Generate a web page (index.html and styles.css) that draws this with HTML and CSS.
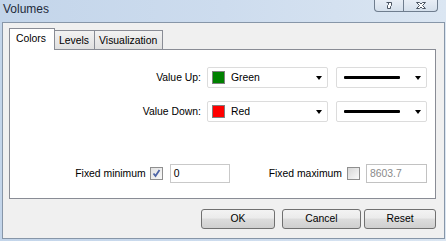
FILE: index.html
```html
<!DOCTYPE html>
<html>
<head>
<meta charset="utf-8">
<link rel="stylesheet" href="styles.css">
</head>
<body>
<div class="window">
  <div class="titlebar">
    <span class="title">Volumes</span>
    <div class="caps">
      <div class="cap help">
        <svg width="12" height="8" viewBox="0 0 12 8"><path d="M3.5 0.5 L8.5 0.5 L8.5 3.5 L7.5 4.5 L7.5 6.5 L4.5 6.5 L4.5 3.5 L5.5 2.5 L5.5 0.5" fill="#fff" stroke="#4b5563" stroke-width="1"/></svg>
      </div>
      <div class="cap close">
        <svg width="14" height="8" viewBox="0 0 14 8"><path d="M2.5 0.5 L5.5 0.5 L7 2 L8.5 0.5 L11.5 0.5 L8.5 3.5 L11.5 6.5 L8.5 6.5 L7 5 L5.5 6.5 L2.5 6.5 L5.5 3.5 Z" fill="#fff" stroke="#4b5563" stroke-width="1"/></svg>
      </div>
    </div>
  </div>
  <div class="client">
    <div class="tabs">
      <div class="tab active">Colors</div>
      <div class="tab">Levels</div>
      <div class="tab">Visualization</div>
    </div>
    <div class="panel">
      <div class="grid">
        <span class="lbl">Value Up:</span>
        <div class="combo color"><span class="swatch green"></span><span class="ctext">Green</span><span class="arrow"></span></div>
        <div class="combo line"><span class="stroke"></span><span class="arrow"></span></div>
        <span class="lbl">Value Down:</span>
        <div class="combo color"><span class="swatch red"></span><span class="ctext">Red</span><span class="arrow"></span></div>
        <div class="combo line"><span class="stroke"></span><span class="arrow"></span></div>
      </div>
      <div class="fixed">
        <div class="group">
          <span class="lbl">Fixed minimum</span>
          <span class="check checked">
            <svg width="9" height="9" viewBox="0 0 9 9"><path d="M1.5 4.5 L3.5 7 L7.5 1" fill="none" stroke="#4d64a6" stroke-width="1.8"/></svg>
          </span>
          <span class="input">0</span>
        </div>
        <div class="group">
          <span class="lbl">Fixed maximum</span>
          <span class="check"></span>
          <span class="input disabled">8603.7</span>
        </div>
      </div>
    </div>
    <div class="buttons">
      <div class="btn ok">OK</div>
      <div class="btn cancel">Cancel</div>
      <div class="btn reset">Reset</div>
    </div>
  </div>
</div>
</body>
</html>
```
FILE: styles.css
```css
html, body {
  margin: 0;
  padding: 0;
}
body {
  width: 446px;
  height: 241px;
  overflow: hidden;
  font-family: "Liberation Sans", Arial, sans-serif;
  font-size: 10.4px;
  color: #000;
}
.window {
  width: 446px;
  height: 241px;
  box-sizing: border-box;
  display: flex;
  flex-direction: column;
  background: linear-gradient(to right, #c3d5ea 0%, #cddcee 50%, #dbe6f2 100%);
}
.titlebar {
  height: 22px;
  flex: none;
  display: flex;
  justify-content: space-between;
  align-items: flex-start;
}
.title {
  font-size: 12px;
  line-height: 14px;
  padding: 2px 0 0 3px;
  color: #1e2a3a;
}
.caps {
  display: flex;
  margin-right: 8px;
}
.cap {
  height: 12px;
  border: 1px solid #6f7d8e;
  border-top: none;
  background: linear-gradient(#e8eef6, #d5e0ec);
  display: flex;
  justify-content: center;
  align-items: flex-end;
  box-sizing: border-box;
  padding-bottom: 1px;
}
.cap.help {
  width: 30px;
  border-radius: 0 0 0 4px;
}
.cap.close {
  width: 34px;
  border-left: none;
  border-radius: 0 0 4px 0;
}
.client {
  flex: 1;
  margin: 0 1px 2px 2px;
  border: 1px solid #8796a8;
  background: #f0f0f0;
  padding: 6px 8px 8px 6px;
  display: flex;
  flex-direction: column;
}
.tabs {
  display: flex;
  align-items: flex-end;
  height: 21px;
  position: relative;
  z-index: 1;
  margin-bottom: -1px;
}
.tab {
  height: 19px;
  box-sizing: border-box;
  border: 1px solid #898c95;
  border-bottom: none;
  background: linear-gradient(#f2f2f2, #e0e0e0);
  line-height: 19px;
  padding: 0 5px 0 4px;
  margin-left: -1px;
  margin-bottom: 1px;
}
.tab:first-child {
  margin-left: 0;
}
.tab.active {
  height: 22px;
  margin-bottom: 0;
  background: #fff;
  line-height: 20px;
  padding: 0 8px 0 6px;
  position: relative;
  z-index: 2;
}
.panel {
  height: 150px;
  box-sizing: border-box;
  border: 1px solid #898c95;
  background: #fff;
  padding: 17px 8px 14px 0;
  display: flex;
  flex-direction: column;
}
.grid {
  display: grid;
  grid-template-columns: 1fr 121px 91px;
  grid-auto-rows: 21px;
  column-gap: 8px;
  row-gap: 13px;
}
.lbl {
  line-height: 21px;
  white-space: nowrap;
}
.grid .lbl {
  text-align: right;
  margin-right: -2px;
}
.combo {
  box-sizing: border-box;
  border: 1px solid #dcdcdc;
  border-radius: 2px;
  background: #fff;
  display: flex;
  align-items: center;
}
.swatch {
  width: 13px;
  height: 13px;
  box-sizing: border-box;
  border: 1px solid #808080;
  margin-left: 4px;
  margin-right: 6px;
}
.swatch.green { background: #008000; }
.swatch.red { background: #ff0000; }
.ctext {
  flex: 1;
}
.arrow {
  width: 0;
  height: 0;
  border-left: 3.5px solid transparent;
  border-right: 3.5px solid transparent;
  border-top: 4px solid #000;
  margin-right: 5px;
}
.stroke {
  width: 58px;
  height: 3px;
  background: #000;
  margin-left: 7px;
  margin-right: 15px;
  border-radius: 1px;
}
.fixed {
  margin-top: auto;
  display: flex;
  justify-content: flex-end;
  align-items: center;
  gap: 39px;
}
.group {
  display: flex;
  align-items: center;
}
.check {
  width: 13px;
  height: 13px;
  box-sizing: border-box;
  border: 1px solid #8f8f8f;
  background: linear-gradient(135deg, #d6d6d6, #fafafa);
  margin: 0 7px 0 4px;
  display: flex;
  align-items: center;
  justify-content: center;
}
.check.checked {
  background: linear-gradient(135deg, #e2e2e2, #f8f8f8);
}
.input {
  width: 60px;
  height: 19px;
  box-sizing: border-box;
  border: 1px solid #c9c9c9;
  line-height: 17px;
  padding-left: 3px;
  background: #fff;
}
.input.disabled {
  color: #8a8a8a;
  border-color: #c2c2c2;
  width: 61px;
}
.group:last-child .check {
  margin: 0 6px 0 5px;
}
.buttons {
  display: flex;
  justify-content: flex-end;
  margin-top: 10px;
}
.btn {
  height: 20px;
  box-sizing: border-box;
  border: 1px solid #707070;
  border-radius: 3px;
  background: linear-gradient(#f3f3f3 0%, #ebebeb 45%, #dddddd 50%, #cfcfcf 100%);
  text-align: center;
  line-height: 18px;
}
.btn.ok { width: 74px; margin-right: 7px; }
.btn.cancel { width: 79px; margin-right: 3px; }
.btn.reset { width: 72px; }
```
